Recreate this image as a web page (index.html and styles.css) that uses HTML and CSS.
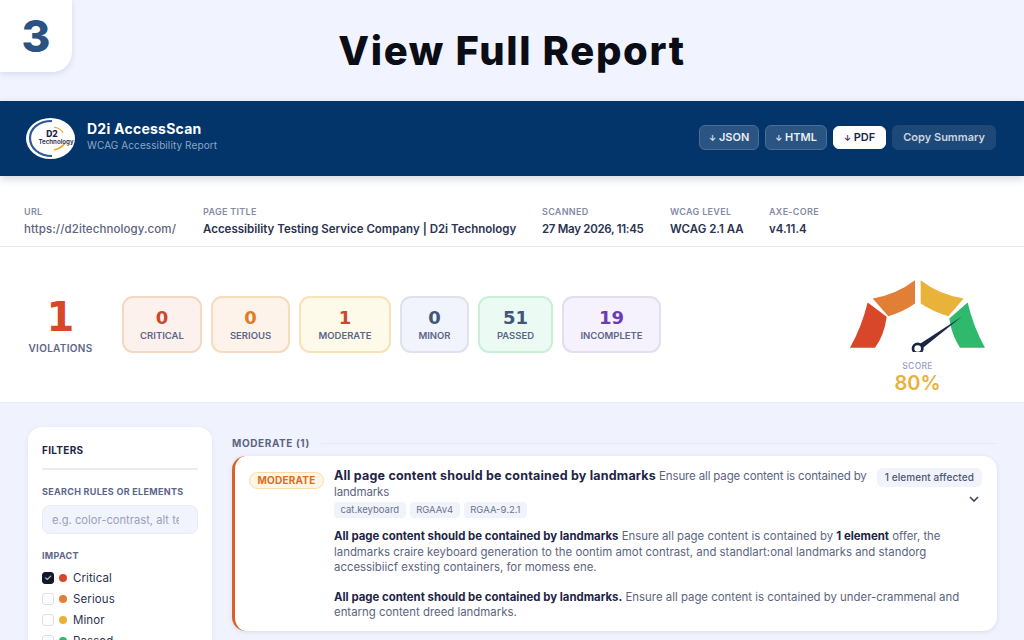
FILE: index.html
```html
<!DOCTYPE html>
<html lang="en">
<head>
    <meta charset="UTF-8">
    <meta name="viewport" content="width=device-width, initial-scale=1.0">
    <title>View Full Report</title>
    <link rel="stylesheet" href="styles.css">
</head>
<body>
    <div class="intro">
        <div class="step">3</div>
        <h1>View Full Report</h1>
    </div>

    <header class="report-header">
        <div class="brand">
            <svg class="logo" viewBox="0 0 49 41" aria-hidden="true">
                <ellipse cx="24.5" cy="20.5" rx="24.5" ry="20.5" fill="#fff"/>
                <path d="M26 3 C12 3 4 11 4 20 C4 30 13 38 26 38" fill="none" stroke="#2c5a94" stroke-width="2.2"/>
                <path d="M28 32 C33 31 37 28 39 25" fill="none" stroke="#e3a92b" stroke-width="1.6"/>
                <path d="M28 9 C33 10 36 12 37 15" fill="none" stroke="#e3a92b" stroke-width="1.2"/>
                <text class="logo-d2" x="26" y="18.5" text-anchor="middle">D2</text>
                <text class="logo-tech" x="30" y="25.5" text-anchor="middle">Technology</text>
            </svg>
            <div class="brand-text">
                <div class="brand-name">D2i AccessScan</div>
                <div class="brand-sub">WCAG Accessibility Report</div>
            </div>
        </div>
        <div class="actions">
            <button class="btn"><span class="arrow">↓</span> JSON</button>
            <button class="btn"><span class="arrow">↓</span> HTML</button>
            <button class="btn btn-white"><span class="arrow">↓</span> PDF</button>
            <button class="btn btn-quiet">Copy Summary</button>
        </div>
    </header>

    <section class="meta">
        <div class="meta-item meta-url">
            <div class="meta-label">URL</div>
            <div class="meta-value light">https://d2itechnology.com/</div>
        </div>
        <div class="meta-item meta-title">
            <div class="meta-label">PAGE TITLE</div>
            <div class="meta-value">Accessibility Testing Service Company | D2i Technology</div>
        </div>
        <div class="meta-item meta-scanned">
            <div class="meta-label">SCANNED</div>
            <div class="meta-value">27 May 2026, 11:45</div>
        </div>
        <div class="meta-item meta-level">
            <div class="meta-label">WCAG LEVEL</div>
            <div class="meta-value">WCAG 2.1 AA</div>
        </div>
        <div class="meta-item">
            <div class="meta-label">AXE-CORE</div>
            <div class="meta-value">v4.11.4</div>
        </div>
    </section>

    <section class="stats">
        <div class="violations">
            <div class="violations-num">1</div>
            <div class="violations-label">VIOLATIONS</div>
        </div>
        <div class="stat stat-critical"><div class="stat-num">0</div><div class="stat-label">CRITICAL</div></div>
        <div class="stat stat-serious"><div class="stat-num">0</div><div class="stat-label">SERIOUS</div></div>
        <div class="stat stat-moderate"><div class="stat-num">1</div><div class="stat-label">MODERATE</div></div>
        <div class="stat stat-minor"><div class="stat-num">0</div><div class="stat-label">MINOR</div></div>
        <div class="stat stat-passed"><div class="stat-num">51</div><div class="stat-label">PASSED</div></div>
        <div class="stat stat-incomplete"><div class="stat-num">19</div><div class="stat-label">INCOMPLETE</div></div>

        <div class="gauge">
            <svg class="gauge-svg" viewBox="75 30 405 215" aria-hidden="true">
                <path d="M128 97 L185 140 Q178 195 150 233 L75 233 Q110 170 128 97 Z" fill="#d9472b"/>
                <path d="M143 85 Q215 72 270 30 L270 100 Q235 125 190 138 Z" fill="#e27f36"/>
                <path d="M287 30 Q340 72 416 85 L370 138 Q325 125 287 100 Z" fill="#e9b23a"/>
                <path d="M428 97 Q445 170 480 233 L405 233 Q380 195 373 145 Z" fill="#2fb96c"/>
                <path d="M276 227 L410 140 L284 241 Z" fill="#1d2547"/>
                <circle cx="278" cy="235" r="14" fill="#fff" stroke="#1d2547" stroke-width="8"/>
            </svg>
            <div class="gauge-label">SCORE</div>
            <div class="gauge-value">80%</div>
        </div>
    </section>

    <div class="lower">
        <aside class="filters">
            <h2>FILTERS</h2>
            <label class="filter-label" for="search">SEARCH RULES OR ELEMENTS</label>
            <input class="filter-input" id="search" type="text" placeholder="e.g. color-contrast, alt text">
            <div class="filter-label impact-label">IMPACT</div>
            <div class="check-row"><span class="box box-on">✓</span><span class="dot dot-red"></span>Critical</div>
            <div class="check-row"><span class="box"></span><span class="dot dot-orange"></span>Serious</div>
            <div class="check-row"><span class="box"></span><span class="dot dot-yellow"></span>Minor</div>
            <div class="check-row"><span class="box"></span><span class="dot dot-green"></span>Passed</div>
        </aside>

        <main class="results">
            <div class="group-title"><span>MODERATE (1)</span><span class="group-line"></span></div>
            <article class="issue">
                <div class="issue-pill"><span class="pill">MODERATE</span></div>
                <div class="issue-body">
                    <div class="issue-top">
                        <div class="issue-title"><b>All page content should be contained by landmarks</b> Ensure all page content is contained by landmarks</div>
                        <div class="issue-side">
                            <span class="affected">1 element affected</span>
                            <svg class="chevron" viewBox="0 0 12 8" aria-hidden="true"><path d="M2 2 L6 6 L10 2" fill="none" stroke="#3d4766" stroke-width="1.6"/></svg>
                        </div>
                    </div>
                    <div class="tags">
                        <span class="tag">cat.keyboard</span>
                        <span class="tag">RGAAv4</span>
                        <span class="tag">RGAA-9.2.1</span>
                    </div>
                    <p><b>All page content should be contained by landmarks</b> Ensure all page content is contained by <b>1 element</b> offer, the<br>landmarks craire keyboard generation to the oontim amot contrast, and standlart:onal landmarks and standorg<br>accessibiicf exsting containers, for momess ene.</p>
                    <p><b>All page content should be contained by landmarks.</b> Ensure all page content is contained by under-crammenal and<br>entarng content dreed landmarks.</p>
                </div>
            </article>
        </main>
    </div>
</body>
</html>
```

FILE: styles.css
```css
* {
    margin: 0;
    padding: 0;
    box-sizing: border-box;
    font-family: Inter, "Liberation Sans", sans-serif;
}

body {
    width: 1024px;
    height: 640px;
    overflow: hidden;
    background: #f0f3fd;
    color: #1d2547;
}

.intro {
    height: 101px;
    display: grid;
    grid-template-columns: 72px 1fr 72px;
    align-items: center;
    background: #f1f3ff;
}

.step {
    align-self: start;
    height: 72px;
    background: #fff;
    border-bottom-right-radius: 20px;
    box-shadow: 0 2px 6px rgba(30, 40, 90, 0.12);
    color: #2b5382;
    font-size: 44px;
    font-weight: 800;
    line-height: 72px;
    text-align: center;
}

h1 {
    color: #0a0d16;
    font-size: 40px;
    font-weight: 800;
    letter-spacing: 1.65px;
    text-align: center;
}

.report-header {
    height: 75px;
    display: flex;
    justify-content: space-between;
    align-items: center;
    padding: 0 28px 0 26px;
    background: #03356b;
    box-shadow: 0 3px 8px rgba(30, 40, 90, 0.18);
    position: relative;
}

.brand {
    display: flex;
    align-items: center;
    gap: 12px;
}

.logo {
    width: 49px;
    height: 41px;
}

.logo-d2 {
    font-size: 8.5px;
    font-weight: 800;
    fill: #1d2547;
}

.logo-tech {
    font-size: 6.2px;
    font-weight: 600;
    fill: #1d2547;
}

.brand-text {
    margin-bottom: 6px;
}

.brand-name {
    color: #fff;
    font-size: 14px;
    font-weight: 700;
    letter-spacing: 0.25px;
}

.brand-sub {
    color: #8ea6c4;
    font-size: 10px;
    letter-spacing: 0.1px;
    margin-top: 2px;
}

.actions {
    display: flex;
    align-items: center;
    gap: 6px;
    margin-bottom: 3px;
}

.btn {
    height: 25px;
    padding: 0 9px;
    border: 1px solid #4c6e96;
    border-radius: 6px;
    background: #2a5482;
    color: #e9eef6;
    font-size: 11px;
    font-weight: 600;
}

.arrow {
    font-size: 8px;
}

.btn-white {
    height: 23px;
    padding: 0 10px;
    border-color: #fff;
    background: #fff;
    color: #1d2547;
}

.btn-quiet {
    padding: 0 10px;
    border-color: #1d4877;
    background: #1d4877;
    color: #c9d5e4;
}

.meta {
    height: 71px;
    display: flex;
    padding: 30px 24px 0;
    background: #fff;
    border-bottom: 1px solid #e7e9f3;
}

.meta-url { width: 179px; }
.meta-title { width: 339px; }
.meta-scanned { width: 128px; }
.meta-level { width: 99px; }

.meta-label {
    color: #858ba5;
    font-size: 9px;
    font-weight: 600;
    letter-spacing: 0.3px;
    margin-bottom: 5px;
}

.meta-value {
    color: #2b3350;
    font-size: 11.5px;
    font-weight: 600;
    white-space: nowrap;
}

.meta-scanned .meta-value {
    letter-spacing: -0.3px;
}

.meta-value.light {
    color: #5c6480;
    font-weight: 500;
    letter-spacing: 0.1px;
}

.stats {
    height: 156px;
    display: flex;
    align-items: center;
    gap: 9px;
    padding: 0 39px 0 28px;
    background: #fff;
    border-bottom: 1px solid #e9ebf4;
}

.violations {
    width: 65px;
    margin-right: 20px;
    text-align: center;
}

.violations-num {
    color: #d9472b;
    font-family: "DejaVu Sans", sans-serif;
    font-size: 40px;
    font-weight: 700;
    line-height: 42px;
}

.violations-label,
.stat-label {
    color: #5c6688;
    font-size: 9.5px;
    font-weight: 600;
}

.violations-label {
    font-size: 10px;
    letter-spacing: 0.3px;
    margin-top: 4px;
}

.stat {
    height: 57px;
    padding-top: 9px;
    border: 2px solid #e5e5ee;
    border-radius: 11px;
    text-align: center;
}

.stat-num {
    font-family: "DejaVu Sans", sans-serif;
    font-size: 18px;
    font-weight: 700;
    line-height: 22px;
    margin-bottom: 1px;
}

.stat-critical { width: 80px; background: #fdf1ee; border-color: #f3d9c4; }
.stat-critical .stat-num { color: #c9492a; }
.stat-serious { width: 79px; background: #fdf3ea; border-color: #f6dcbf; }
.stat-serious .stat-num { color: #df7c26; }
.stat-moderate { width: 92px; background: #fefaea; border-color: #f8e2b8; }
.stat-moderate .stat-num { color: #c9492a; }
.stat-minor { width: 69px; background: #f1f3fd; border-color: #e0e1ed; }
.stat-minor .stat-num { color: #44557c; }
.stat-passed { width: 75px; background: #ebfbf3; border-color: #c9efd9; }
.stat-passed .stat-num { color: #44557c; }
.stat-incomplete { width: 99px; background: #f5f2fd; border-color: #e2e0ee; }
.stat-incomplete .stat-num { color: #6a3bb5; }

.gauge {
    width: 135px;
    margin-left: auto;
    margin-top: 26px;
    text-align: center;
}

.gauge-svg {
    display: block;
    width: 135px;
    height: 72px;
}

.gauge-label {
    color: #98a0bc;
    font-size: 8.5px;
    font-weight: 500;
    letter-spacing: 0.3px;
    margin-top: 9px;
}

.gauge-value {
    color: #e8b23a;
    font-size: 20px;
    font-weight: 600;
    line-height: 25px;
}

.lower {
    display: flex;
    gap: 20px;
    padding: 24px 27px 0 28px;
}

.filters {
    width: 184px;
    height: 240px;
    flex: none;
    padding: 17px 14px;
    background: #fff;
    border-radius: 14px;
    box-shadow: 0 1px 4px rgba(30, 40, 90, 0.08);
}

.filters h2 {
    color: #1d2547;
    font-size: 10px;
    font-weight: 700;
    letter-spacing: 0.3px;
    padding-bottom: 12px;
    border-bottom: 2px solid #e9ebf5;
    margin-bottom: 16px;
}

.filter-label {
    display: block;
    color: #5c6688;
    font-size: 9px;
    font-weight: 700;
    letter-spacing: 0.3px;
}

.filter-input {
    width: 156px;
    height: 29px;
    margin-top: 8px;
    padding: 0 18px 0 9px;
    background: #f1f3fd;
    border: 1px solid #e9ebf5;
    border-radius: 8px;
    font-size: 11.2px;
}

.filter-input::placeholder {
    color: #9aa1b8;
}

.impact-label {
    margin-top: 16px;
    margin-bottom: 6px;
}

.check-row {
    height: 21px;
    display: flex;
    align-items: center;
    color: #2b3350;
    font-size: 11.5px;
    letter-spacing: 0.1px;
}

.box {
    width: 12px;
    height: 12px;
    margin-right: 5px;
    background: #fff;
    border: 1px solid #dcdfeb;
    border-radius: 3px;
    font-size: 9px;
    line-height: 10px;
    text-align: center;
}

.box-on {
    background: #14172b;
    border-color: #14172b;
    color: #fff;
}

.dot {
    width: 8px;
    height: 8px;
    margin-right: 6px;
    border-radius: 50%;
}

.dot-red { background: #d9472b; }
.dot-orange { background: #e27f36; }
.dot-yellow { background: #e9b23a; }
.dot-green { background: #2fb96c; }

.results {
    flex: 1;
    padding-top: 8px;
}

.group-title {
    display: flex;
    align-items: center;
    gap: 11px;
    height: 16px;
    margin-bottom: 5px;
    color: #5c6480;
    font-size: 10px;
    font-weight: 700;
    letter-spacing: 0.6px;
}

.group-line {
    flex: 1;
    height: 1px;
    background: #e7e9f3;
}

.issue {
    height: 175px;
    display: flex;
    padding: 12px 15px 0 14px;
    background: #fff;
    border-left: 3px solid #d9622b;
    border-radius: 14px;
    box-shadow: 0 1px 4px rgba(30, 40, 90, 0.12);
}

.issue-pill {
    width: 85px;
    flex: none;
}

.pill {
    display: inline-block;
    height: 17px;
    width: 75px;
    margin-top: 2px;
    background: #fef6e4;
    border: 1px solid #f8dcae;
    border-radius: 9px;
    color: #dc6d1d;
    font-size: 10px;
    font-weight: 700;
    letter-spacing: 0.2px;
    line-height: 15px;
    text-align: center;
}

.issue-body {
    flex: 1;
    min-width: 0;
}

.issue-top {
    display: flex;
    justify-content: space-between;
}

.issue-title {
    width: 538px;
    flex: none;
    color: #5c6480;
    font-size: 11.5px;
    letter-spacing: -0.15px;
    line-height: 16px;
}

.issue-title b {
    color: #1d2547;
    font-size: 12.5px;
    font-weight: 700;
    letter-spacing: 0.2px;
}

.issue-side {
    display: flex;
    flex-direction: column;
    align-items: flex-end;
    gap: 8px;
}

.affected {
    height: 19px;
    padding: 0 8px;
    background: #f1f3fa;
    border-radius: 6px;
    color: #4d5674;
    font-size: 10px;
    font-weight: 500;
    letter-spacing: 0.1px;
    line-height: 19px;
    white-space: nowrap;
}

.chevron {
    width: 12px;
    height: 8px;
    margin-right: 2px;
}

.tags {
    display: flex;
    gap: 4px;
    margin-top: -1px;
}

.tag {
    height: 16px;
    padding: 0 6.5px;
    background: #f1f3fa;
    border-radius: 4px;
    color: #6a7390;
    font-size: 9.5px;
    line-height: 16px;
}

.issue-body p {
    margin-top: 11px;
    color: #5c6480;
    font-size: 11.4px;
    line-height: 15.5px;
    white-space: nowrap;
}

.issue-body p + p {
    margin-top: 14px;
}

.issue-body p b {
    color: #1d2547;
    font-weight: 700;
}
```
